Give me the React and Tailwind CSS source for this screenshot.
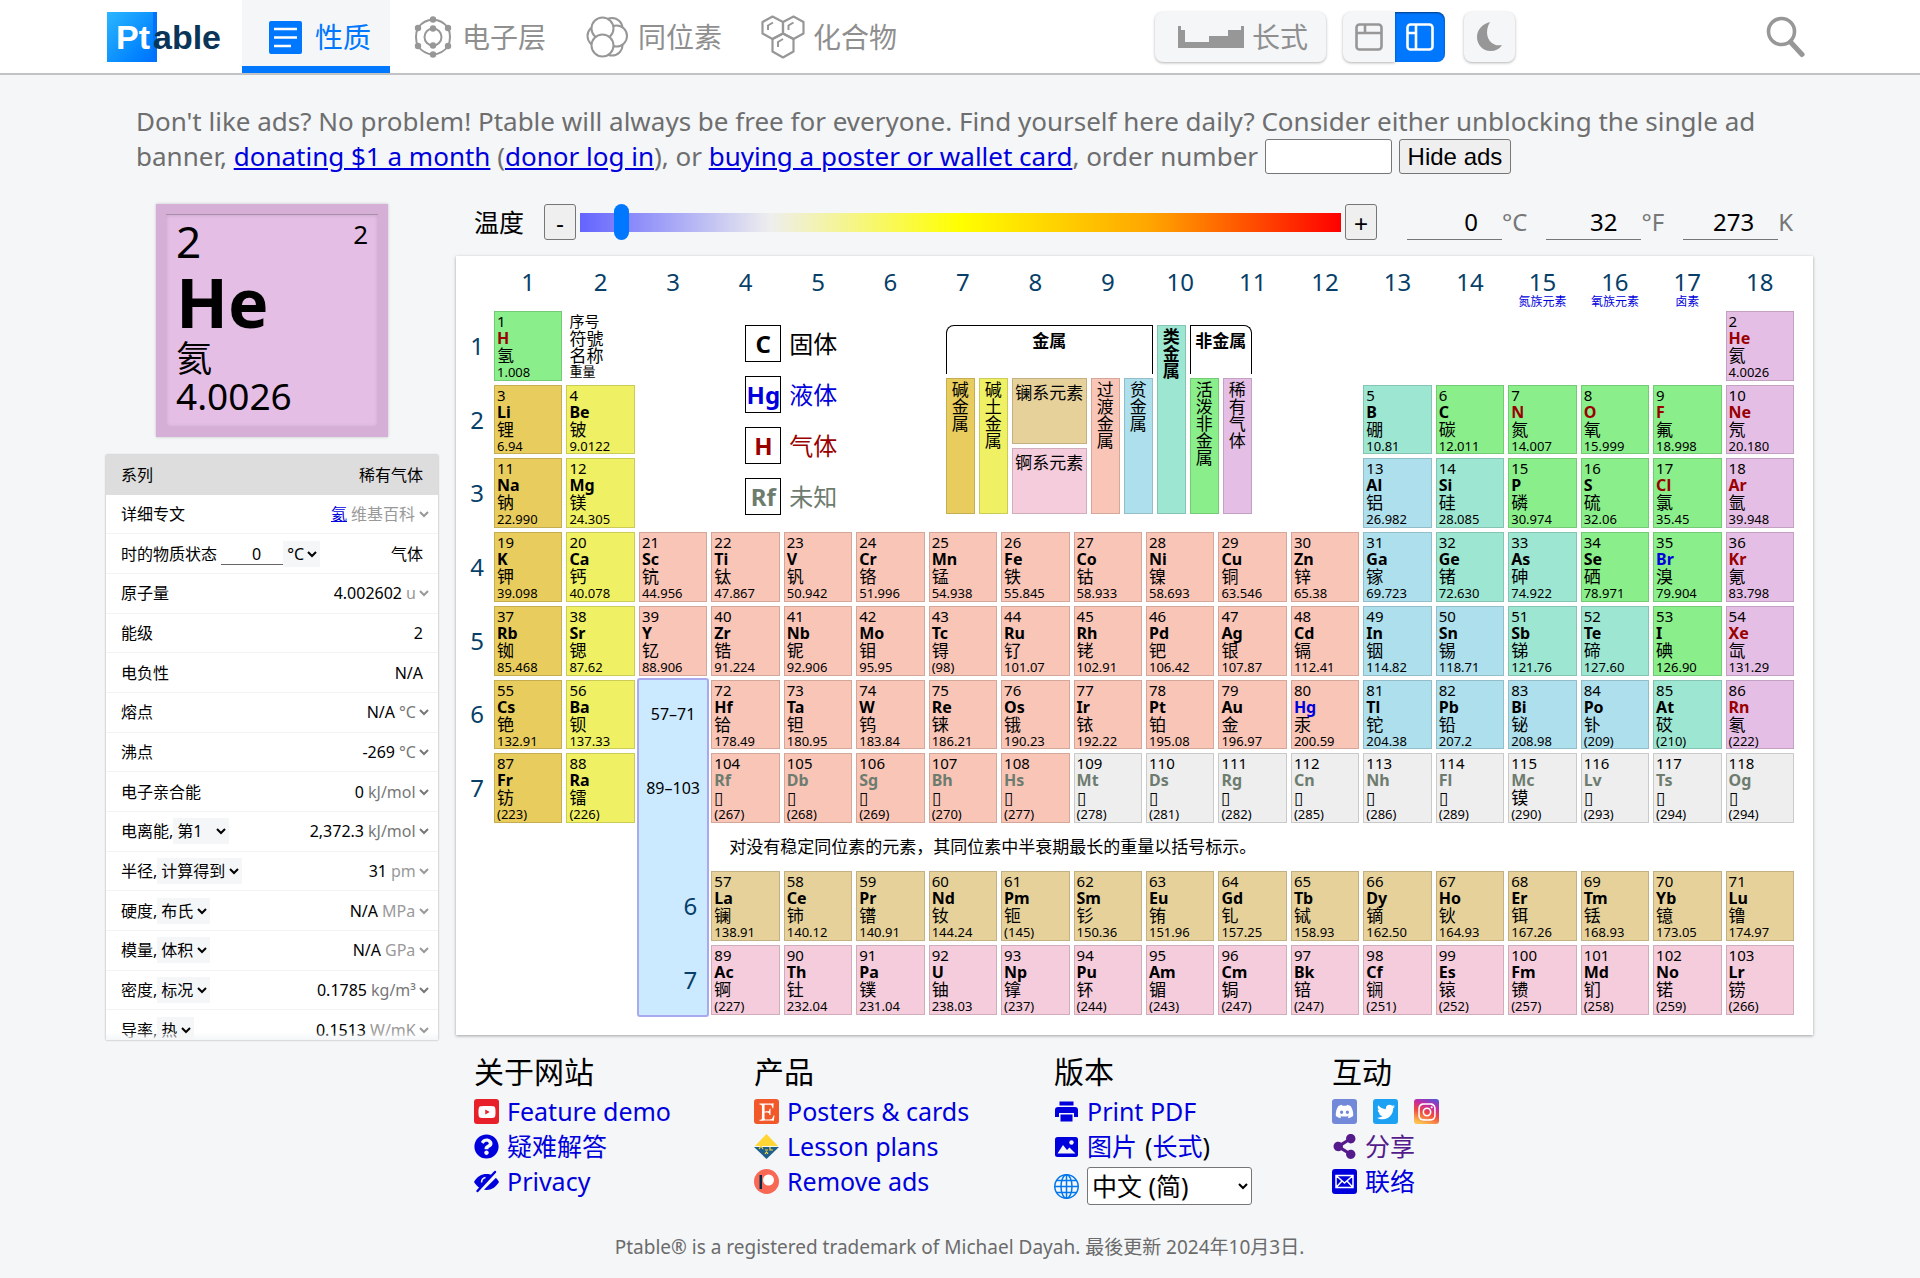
import React from "react";
import { FaYoutube, FaQuestionCircle, FaEtsy, FaDiscord, FaTwitter, FaInstagram, FaShareAlt } from "react-icons/fa";

const TONE = {
  alkali: "bg-[#e8cd5e]",
  earth: "bg-[#eff064]",
  trans: "bg-[#f9c5b7]",
  post: "bg-[#addfec]",
  semi: "bg-[#9de7d2]",
  non: "bg-[#8aee8a]",
  noble: "bg-[#e5bee6]",
  lan: "bg-[#e6d19a]",
  act: "bg-[#f5ccdb]",
  unk: "bg-[#eeeeee]",
};

const STATE = { s: "text-black", l: "text-[#0000dd]", g: "text-[#990000]", u: "text-[#6d7c6f]" };

/* grid row | first column | first atomic number | entries "symbol name weight category state" */
const ROWS = [
  [2, 1, 1, "H 氢 1.008 non g"],
  [2, 18, 2, "He 氦 4.0026 noble g"],
  [3, 1, 3, "Li 锂 6.94 alkali s;Be 铍 9.0122 earth s"],
  [3, 13, 5, "B 硼 10.81 semi s;C 碳 12.011 non s;N 氮 14.007 non g;O 氧 15.999 non g;F 氟 18.998 non g;Ne 氖 20.180 noble g"],
  [4, 1, 11, "Na 钠 22.990 alkali s;Mg 镁 24.305 earth s"],
  [4, 13, 13, "Al 铝 26.982 post s;Si 硅 28.085 semi s;P 磷 30.974 non s;S 硫 32.06 non s;Cl 氯 35.45 non g;Ar 氩 39.948 noble g"],
  [5, 1, 19, "K 钾 39.098 alkali s;Ca 钙 40.078 earth s;Sc 钪 44.956 trans s;Ti 钛 47.867 trans s;V 钒 50.942 trans s;Cr 铬 51.996 trans s;Mn 锰 54.938 trans s;Fe 铁 55.845 trans s;Co 钴 58.933 trans s;Ni 镍 58.693 trans s;Cu 铜 63.546 trans s;Zn 锌 65.38 trans s;Ga 镓 69.723 post s;Ge 锗 72.630 semi s;As 砷 74.922 semi s;Se 硒 78.971 non s;Br 溴 79.904 non l;Kr 氪 83.798 noble g"],
  [6, 1, 37, "Rb 铷 85.468 alkali s;Sr 锶 87.62 earth s;Y 钇 88.906 trans s;Zr 锆 91.224 trans s;Nb 铌 92.906 trans s;Mo 钼 95.95 trans s;Tc 锝 (98) trans s;Ru 钌 101.07 trans s;Rh 铑 102.91 trans s;Pd 钯 106.42 trans s;Ag 银 107.87 trans s;Cd 镉 112.41 trans s;In 铟 114.82 post s;Sn 锡 118.71 post s;Sb 锑 121.76 semi s;Te 碲 127.60 semi s;I 碘 126.90 non s;Xe 氙 131.29 noble g"],
  [7, 1, 55, "Cs 铯 132.91 alkali s;Ba 钡 137.33 earth s"],
  [7, 4, 72, "Hf 铪 178.49 trans s;Ta 钽 180.95 trans s;W 钨 183.84 trans s;Re 铼 186.21 trans s;Os 锇 190.23 trans s;Ir 铱 192.22 trans s;Pt 铂 195.08 trans s;Au 金 196.97 trans s;Hg 汞 200.59 trans l;Tl 铊 204.38 post s;Pb 铅 207.2 post s;Bi 铋 208.98 post s;Po 钋 (209) post s;At 砹 (210) semi s;Rn 氡 (222) noble g"],
  [8, 1, 87, "Fr 钫 (223) alkali s;Ra 镭 (226) earth s"],
  [8, 4, 104, "Rf ▯ (267) trans u;Db ▯ (268) trans u;Sg ▯ (269) trans u;Bh ▯ (270) trans u;Hs ▯ (277) trans u;Mt ▯ (278) unk u;Ds ▯ (281) unk u;Rg ▯ (282) unk u;Cn ▯ (285) unk u;Nh ▯ (286) unk u;Fl ▯ (289) unk u;Mc 镆 (290) unk u;Lv ▯ (293) unk u;Ts ▯ (294) unk u;Og ▯ (294) unk u"],
  [10, 4, 57, "La 镧 138.91 lan s;Ce 铈 140.12 lan s;Pr 镨 140.91 lan s;Nd 钕 144.24 lan s;Pm 钷 (145) lan s;Sm 钐 150.36 lan s;Eu 铕 151.96 lan s;Gd 钆 157.25 lan s;Tb 铽 158.93 lan s;Dy 镝 162.50 lan s;Ho 钬 164.93 lan s;Er 铒 167.26 lan s;Tm 铥 168.93 lan s;Yb 镱 173.05 lan s;Lu 镥 174.97 lan s"],
  [11, 4, 89, "Ac 锕 (227) act s;Th 钍 232.04 act s;Pa 镤 231.04 act s;U 铀 238.03 act s;Np 镎 (237) act s;Pu 钚 (244) act s;Am 镅 (243) act s;Cm 锔 (247) act s;Bk 锫 (247) act s;Cf 锎 (251) act s;Es 锿 (252) act s;Fm 镄 (257) act s;Md 钔 (258) act s;No 锘 (259) act s;Lr 铹 (266) act s"],
];

const ELEMENTS = ROWS.flatMap(([row, col, z, list]) =>
  list.split(";").map((entry, i) => {
    const [sym, name, weight, tone, state] = entry.split(" ");
    return { row, col: col + i + 1, z: z + i, sym, name, weight, tone, state };
  })
);

const at = (row, col) => ({ gridRow: row, gridColumn: col });

function Cell({ e }) {
  return (
    <div style={at(e.row, e.col)} className={`flex flex-col border border-black/15 pl-[2px] pt-px ${TONE[e.tone]}`}>
      <span className="text-[15px] leading-[17px]">{e.z}</span>
      <b className={`text-[16px] leading-[17px] ${STATE[e.state]}`}>{e.sym}</b>
      <span className="text-[17px] leading-[18px]">{e.name}</span>
      <span className="text-[13px] leading-[14px]">{e.weight}</span>
    </div>
  );
}

const GROUP_NAMES = { 15: "氮族元素", 16: "氧族元素", 17: "卤素" };

function PhaseLegend() {
  const items = [
    ["C", "固体", "text-black"],
    ["Hg", "液体", "text-[#0000dd]"],
    ["H", "气体", "text-[#990000]"],
    ["Rf", "未知", "text-[#6d7c6f]"],
  ];
  return (
    <div style={{ gridRow: "2 / 5", gridColumn: "5 / 8" }} className="flex flex-col gap-[14px] pl-[34px] pt-[14px]">
      {items.map(([s, t, c]) => (
        <div key={s} className={`flex items-center gap-2 text-[24px] leading-[35px] ${c}`}>
          <b className="flex h-[37px] w-9 items-center justify-center border border-black">{s}</b>
          <span>{t}</span>
        </div>
      ))}
    </div>
  );
}

function Strip({ tone, children, className = "" }) {
  return (
    <div className={`flex justify-center border border-black/15 pt-[2px] text-[17px] leading-[17px] ${TONE[tone]} ${className}`}>
      <span className="w-[17px] break-all">{children}</span>
    </div>
  );
}

function SeriesLegend() {
  return (
    <div style={{ gridRow: "2 / 5", gridColumn: "8 / 13" }} className="pl-[17px] pt-[14px]">
      <div className="grid w-max grid-cols-[29px_29px_75px_29px_29px_29px_29px_29px] grid-rows-[49px_66px_66px] gap-1 text-[17px] leading-[17px]">
        <div className="col-span-5 rounded-tl-lg border border-b-0 border-black pt-[6px] text-center font-bold">金属</div>
        <Strip tone="semi" className="row-span-3 font-bold">类金属</Strip>
        <div className="col-span-2 rounded-tr-lg border border-b-0 border-black pt-[6px] text-center font-bold">非金属</div>
        <Strip tone="alkali" className="row-span-2">碱金属</Strip>
        <Strip tone="earth" className="row-span-2">碱土金属</Strip>
        <div className={`border border-black/15 pt-[5px] text-center ${TONE.lan}`}>镧系元素</div>
        <Strip tone="trans" className="row-span-2">过渡金属</Strip>
        <Strip tone="post" className="row-span-2">贫金属</Strip>
        <Strip tone="non" className="row-span-2">活泼非金属</Strip>
        <Strip tone="noble" className="row-span-2">稀有气体</Strip>
        <div className={`col-start-3 border border-black/15 pt-[5px] text-center ${TONE.act}`}>锕系元素</div>
      </div>
    </div>
  );
}

function PeriodicTable() {
  return (
    <section className="bg-white pb-5 pl-2 pr-[19px] pt-[7px] shadow-[0_1px_3px_rgba(0,0,0,0.35)]">
      <div className="grid h-[752px] grid-cols-[26px_repeat(18,minmax(0,1fr))] grid-rows-[44px_repeat(7,minmax(0,1fr))_40px_70px_70px] gap-1">
        {Array.from({ length: 18 }, (_, i) => i + 1).map((g) => (
          <div key={g} style={at(1, g + 1)} className="flex flex-col items-center whitespace-nowrap pt-[3px] text-[#073f69]">
            <span className="text-[24px] leading-8">{g}</span>
            {GROUP_NAMES[g] && (
              <a href="#" className="text-[12px] leading-2 text-[#0000dd]">{GROUP_NAMES[g]}</a>
            )}
          </div>
        ))}
        {[1, 2, 3, 4, 5, 6, 7].map((p) => (
          <div key={p} style={at(p + 1, 1)} className="flex items-center justify-center text-[24px] leading-8 text-[#073f69]">{p}</div>
        ))}
        <div style={at(2, 3)} className="flex flex-col pl-[3px] pt-[2px] text-[17px] leading-[17px]">
          <span className="text-[15px]">序号</span>
          <span>符號</span>
          <span>名称</span>
          <span className="text-[13px] leading-[14px]">重量</span>
        </div>
        <PhaseLegend />
        <SeriesLegend />
        <div style={{ gridRow: "7 / 12", gridColumn: 4 }} className="-m-[2px] rounded-[3px] border-2 border-[#a9a9f0] bg-[#cbeaff]" />
        <div style={at(7, 4)} className="flex items-center justify-center text-[16px]">57–71</div>
        <div style={at(8, 4)} className="flex items-center justify-center text-[16px]">89–103</div>
        <div style={at(10, 4)} className="flex items-center justify-end pr-[10px] text-[24px] text-[#073f69]">6</div>
        <div style={at(11, 4)} className="flex items-center justify-end pr-[10px] text-[24px] text-[#073f69]">7</div>
        <p style={{ gridRow: 9, gridColumn: "5 / 20" }} className="flex items-center pl-[18px] text-[17px]">
          对没有稳定同位素的元素，其同位素中半衰期最长的重量以括号标示。
        </p>
        {ELEMENTS.map((e) => <Cell key={e.z} e={e} />)}
      </div>
    </section>
  );
}

function Pick({ label, value, className = "" }) {
  return (
    <select aria-label={label} defaultValue={value} className={`appearance-auto border-0 py-px text-[16px] leading-5 ${className}`}>
      <option>{value}</option>
    </select>
  );
}

const PROPS = [
  ["原子量", null, "4.002602", "u", "text-[#999999]"],
  ["能级", null, "2"],
  ["电负性", null, "N/A"],
  ["熔点", null, "N/A", "°C", "text-[#777777]"],
  ["沸点", null, "-269", "°C", "text-[#777777]"],
  ["电子亲合能", null, "0", "kJ/mol", "text-[#777777]"],
  ["电离能", "第1", "2,372.3", "kJ/mol", "text-[#777777]"],
  ["半径", "计算得到", "31", "pm", "text-[#999999]"],
  ["硬度", "布氏", "N/A", "MPa", "text-[#999999]"],
  ["模量", "体积", "N/A", "GPa", "text-[#999999]"],
  ["密度", "标况", "0.1785", "kg/m³", "text-[#777777]"],
  ["导率", "热", "0.1513", "W/mK", "text-[#999999]"],
];

const ROW = "flex items-center justify-between whitespace-nowrap border-b border-[#f1f3f4] pl-[15px]";

function PropertyPanel() {
  return (
    <div className="relative mt-[18px] h-[585px] overflow-hidden bg-white shadow-[0_0_2px_rgba(0,0,0,0.35)]">
      <table className="block text-[16px] leading-5">
        <tbody className="grid h-[595px] auto-rows-fr">
          <tr className="flex items-center justify-between bg-[#dddddd] px-[15px]">
            <th scope="row" className="font-normal">系列</th>
            <td>稀有气体</td>
          </tr>
          <tr className={`${ROW} pr-[6px]`}>
            <th scope="row" className="font-normal">详细专文</th>
            <td>
              <a href="#" className="text-[#0000dd] underline">氦</a>
              <Pick label="详细专文" value="维基百科" className="text-[#999999]" />
            </td>
          </tr>
          <tr className={`${ROW} pr-[15px]`}>
            <th scope="row" className="font-normal">
              <label>
                时的物质状态{" "}
                <input defaultValue="0" className="w-[62px] border-b border-[#666666] pr-[22px] text-right" />
              </label>
              <Pick label="温标" value="°C" className="bg-[#f4f6f8]" />
            </th>
            <td>气体</td>
          </tr>
          {PROPS.map(([name, option, value, unit, tone]) => (
            <tr key={name} className={`${ROW} ${unit ? "pr-[6px]" : "pr-[15px]"}`}>
              <th scope="row" className="font-normal">
                {name}
                {option && <>,<Pick label={name} value={option} className={`bg-[#f4f6f8] ${option === "第1" ? "w-14" : ""}`} /></>}
              </th>
              <td>
                {value}
                {unit && <Pick label={`${name} 单位`} value={unit} className={tone} />}
              </td>
            </tr>
          ))}
        </tbody>
      </table>
      <div className="absolute inset-x-0 bottom-0 h-2 bg-linear-to-b from-transparent to-[#f4f6f8]" />
    </div>
  );
}

function BigTile() {
  return (
    <div className="mx-auto h-[233px] w-[232px] border-[10px] border-[#d5afd6] bg-[#e5bee6] shadow-[0_0_3px_rgba(0,0,0,0.2)]">
      <div className="relative flex h-full flex-col border-t border-black/25 pl-[10px] pt-[5px] shadow-[inset_0_0_4px_rgba(0,0,0,0.15)]">
        <span className="absolute right-[10px] top-[3px] text-[26px] leading-8">2</span>
        <span className="text-[44px] leading-[42px]">2</span>
        <b className="text-[68px] leading-[80px]">He</b>
        <span className="text-[36px] leading-[34px]">氦</span>
        <span className="text-[37px] leading-[40px]">4.0026</span>
      </div>
    </div>
  );
}

function Temperature() {
  const unit = (id, value, label) => (
    <div className="flex items-center">
      <input id={id} defaultValue={value} className="w-[95px] border-b border-[#777777] pr-6 text-right text-[24px] leading-[34px] text-black" />
      <label htmlFor={id} className="text-[24px] leading-[34px] text-[#777777]">{label}</label>
    </div>
  );
  const step = "h-9 w-8 shrink-0 rounded-[3px] border border-[#767676] bg-[#efefef] pt-[3px] font-[Liberation_Sans,sans-serif] text-[24px] leading-7";
  return (
    <div className="mb-4 flex h-9 items-center pl-[18px] pr-5">
      <label htmlFor="temp" className="mr-[20px] shrink-0 text-[25px] leading-9">温度</label>
      <button className={step}>-</button>
      <input
        id="temp"
        type="range"
        min="0"
        max="6000"
        defaultValue="273"
        className="mx-1 h-[19px] min-w-0 flex-1 appearance-none bg-[linear-gradient(90deg,#6464ff_0%,#eeeeee_25%,#ffff00_50%,#ffa500_75%,#ff0000_100%)] [&::-webkit-slider-thumb]:h-9 [&::-webkit-slider-thumb]:w-[15px] [&::-webkit-slider-thumb]:appearance-none [&::-webkit-slider-thumb]:rounded-lg [&::-webkit-slider-thumb]:bg-[#0077ff]"
      />
      <button className={step}>+</button>
      <div className="ml-[30px] flex gap-[19px]">
        {unit("tc", "0", "°C")}
        {unit("tf", "32", "°F")}
        {unit("tk", "273", "K")}
      </div>
    </div>
  );
}

/* ---------- header icons ---------- */

const ListIcon = () => (
  <svg width="33" height="33" viewBox="0 0 33 33">
    <rect width="33" height="33" rx="2" fill="#0077ff" />
    <g stroke="#fff" strokeWidth="2.6">
      <path d="M5 8H28M5 16.5H28M5 25H22" />
    </g>
  </svg>
);

const ShellIcon = () => (
  <svg width="38" height="42" viewBox="0 0 38 42" fill="none" stroke="#979797" strokeWidth="2">
    <path d="M19 3.5Q28 4 34 11.500Q38 21 34 30.500Q28 38 19 38.500Q10 38 4 30.500Q0 21 4 11.500Q10 4 19 3.500Z" />
    <circle cx="19" cy="21" r="8.500" />
    <g fill="#979797" stroke="none">
      <circle cx="19" cy="3.500" r="3.200" />
      <circle cx="34" cy="12" r="3.200" />
      <circle cx="34" cy="30" r="3.200" />
      <circle cx="19" cy="38.500" r="3.200" />
      <circle cx="4" cy="30" r="3.200" />
      <circle cx="4" cy="12" r="3.200" />
      <circle cx="19" cy="12.500" r="3.200" />
      <circle cx="19" cy="29.500" r="3.200" />
    </g>
  </svg>
);

const IsotopeIcon = () => (
  <svg width="42" height="42" viewBox="0 0 42 42" fill="#fff" stroke="#979797" strokeWidth="2">
    <circle cx="26" cy="12.500" r="10.500" />
    <circle cx="26" cy="29" r="10.500" />
    <circle cx="12" cy="20" r="10.500" />
    <circle cx="30.500" cy="20" r="10.500" />
    <circle cx="16.500" cy="12.500" r="11" />
    <circle cx="16.500" cy="29.500" r="11" />
  </svg>
);

const CompoundIcon = () => (
  <svg width="44" height="44" viewBox="0 0 44 44" fill="none" stroke="#979797" strokeWidth="2.200" strokeLinejoin="round">
    <path d="M11.500 1.500L22 7V18.500L11.500 24L1.500 18.500V7Z" />
    <path d="M32.500 1.500L42.500 7V18.500L32.500 24L22 18.500V7Z" />
    <path d="M22 18.500L32.500 24V36.500L22 42.500L11.500 36.500V24Z" />
    <path d="M7 15V10.500L12 7.500M27.500 15V10.500L32.500 7.500M17 32V27L22 24" strokeWidth="2" />
  </svg>
);

const LongFormIcon = () => (
  <svg width="66" height="22" viewBox="0 0 66 22">
    <path fill="#979797" d="M0 0H3V4H7V16H31V10H50V4H63V0H66V22H0Z" />
  </svg>
);

const LayoutIcon = ({ side }) => (
  <svg width="28" height="28" viewBox="0 0 28 28" fill="none" stroke={side ? "#fff" : "#979797"} strokeWidth="2.600">
    <rect x="1.500" y="1.500" width="25" height="25" rx="3" />
    {side ? <path d="M10 1.500V26.500M1.500 10H10" /> : <path d="M1.500 10H26.500M10 1.500V10" />}
  </svg>
);

const MoonIcon = () => (
  <svg width="25" height="29" viewBox="0 0 25 29">
    <path fill="#979797" d="M13 0C5 2 0 8 0 15C0 23 6 29 13.500 29C18.500 29 22.500 27 25 23C22 23.500 20 23.500 17.500 22.500C10 19.500 7.500 9 13 0Z" />
  </svg>
);

const SearchIcon = () => (
  <svg width="39" height="42" viewBox="0 0 39 42" fill="none" stroke="#979797">
    <circle cx="15.500" cy="15.500" r="13" strokeWidth="3.600" />
    <path d="M24.500 26L36 38.500" strokeWidth="5" strokeLinecap="round" />
  </svg>
);

function Header() {
  const tab = "flex h-full items-center pt-px text-[28px] leading-9 text-[#8f8f8f]";
  const key = "flex h-[50px] items-center justify-center bg-[#f4f6f8] shadow-[0_1px_3px_rgba(0,0,0,0.3)]";
  return (
    <header className="flex h-[75px] items-center border-b-2 border-[#c0c2c4] bg-white pl-[107px] pr-[115px]">
      <a href="#" aria-label="Ptable" className="mr-[21px] flex font-[Liberation_Sans,sans-serif] text-[34px] font-bold leading-[50px]">
        <span className="w-[46px] bg-linear-to-br from-[#2cb5ff] to-[#0072ff] pl-[9px] text-white">Pt</span>
        <span className="bg-[linear-gradient(90deg,#0072ff_4px,transparent_4px)] text-[#0a3558]">able</span>
      </a>
      <nav className="flex h-full">
        <a href="#" className="mr-[24px] flex h-full items-center gap-[13px] border-b-[7px] border-[#0077ff] bg-[#f4f6f8] pl-[27px] pr-[19px] pt-[8px] text-[28px] leading-9 text-[#0077ff]">
          <ListIcon />性质
        </a>
        <a href="#" className={`${tab} mr-[40px] gap-[10px]`}><ShellIcon />电子层</a>
        <a href="#" className={`${tab} mr-[39px] gap-[10px]`}><IsotopeIcon />同位素</a>
        <a href="#" className={`${tab} gap-[8px]`}><CompoundIcon />化合物</a>
      </nav>
      <div className="ml-auto mr-[251px] flex items-center">
        <button className={`${key} mr-[17px] gap-2 rounded-lg pl-[23px] pr-[18px] text-[28px] text-[#8f8f8f]`}>
          <LongFormIcon />长式
        </button>
        <button aria-label="top layout" className={`${key} w-[52px] rounded-l-lg`}><LayoutIcon /></button>
        <button aria-label="side layout" className="mr-[19px] flex h-[50px] w-[50px] items-center justify-center rounded-r-lg bg-[#0077ff] shadow-[inset_0_1px_2px_rgba(0,0,0,0.5)]">
          <LayoutIcon side />
        </button>
        <button aria-label="dark mode" className={`${key} w-[51px] rounded-lg`}><MoonIcon /></button>
      </div>
      <button aria-label="search"><SearchIcon /></button>
    </header>
  );
}

/* ---------- footer ---------- */

const Badge = ({ className, children }) => (
  <span className={`flex h-[25px] w-[25px] shrink-0 items-center justify-center ${className}`}>{children}</span>
);

const HiddenEyeIcon = () => (
  <svg width="25" height="25" viewBox="0 0 25 25">
    <path fill="#0000dd" d="M0 13C3 7.500 7.500 5 12.500 5C17.500 5 22 7.500 25 13C22 18 17.500 21 12.500 21C7.500 21 3 18 0 13Z" />
    <path d="M7.500 13.500Q7.500 9.500 11.500 8.500" fill="none" stroke="#f4f6f8" strokeWidth="1.500" />
    <path d="M4 23.500L23.500 4" stroke="#f4f6f8" strokeWidth="4.500" />
    <path d="M3.500 22L21 3" stroke="#0000dd" strokeWidth="2.400" strokeLinecap="round" />
  </svg>
);

const PrinterIcon = () => (
  <svg width="25" height="25" viewBox="0 0 25 25" fill="#0000dd">
    <path d="M5.500 2.500H19.500V6.500H5.500Z" />
    <path d="M4 8H21Q24 8 24 11V18H20V14H5V18H1V11Q1 8 4 8Z" />
    <path d="M6.500 15.500H18.500V22.500H6.500Z" />
  </svg>
);

const PictureIcon = () => (
  <svg width="25" height="25" viewBox="0 0 25 25">
    <rect x="1" y="3" width="23" height="20" rx="2.500" fill="#0000dd" />
    <path d="M3.500 19.500L9 11L13 16L15.500 13.500L21.500 19.500Z" fill="#f4f6f8" />
    <circle cx="17.500" cy="8.500" r="2.200" fill="#f4f6f8" />
  </svg>
);

const LessonIcon = () => (
  <svg width="25" height="25" viewBox="0 0 25 25">
    <path d="M12.500 0L24 12H1Z" fill="#ffd633" />
    <path d="M0 13H25L12.500 25Z" fill="#1d5f8a" />
    <path d="M5 15L7 12L9 15M11 16H14M16 13V16H19M11 20L12.500 18L14 20" stroke="#ffd633" strokeWidth="1.200" fill="none" />
  </svg>
);

const PatreonIcon = () => (
  <svg width="25" height="25" viewBox="0 0 25 25">
    <circle cx="12.500" cy="12.500" r="12.500" fill="#f96854" />
    <rect x="5.500" y="6" width="2.500" height="14" fill="#052d49" />
    <circle cx="14.500" cy="11" r="5.500" fill="#fff" />
  </svg>
);

const GlobeIcon = () => (
  <svg width="25" height="25" viewBox="0 0 25 25" fill="none" stroke="#0077ee" strokeWidth="1.500">
    <circle cx="12.500" cy="12.500" r="11.700" />
    <ellipse cx="12.500" cy="12.500" rx="5.500" ry="11.700" />
    <path d="M12.500 0.700V24.300M0.700 12.500H24.300M2.500 6.500H22.500M2.500 18.500H22.500" />
  </svg>
);

const MailIcon = () => (
  <svg width="25" height="25" viewBox="0 0 25 25">
    <rect width="25" height="25" rx="3" fill="#0000dd" />
    <path d="M4 6.500H21V18.500H4ZM4 6.500L12.500 14L21 6.500M4 18.500L10 12M21 18.500L15 12" fill="none" stroke="#fff" strokeWidth="1.500" />
  </svg>
);

function FooterColumn({ title, className = "", children }) {
  return (
    <div className={className}>
      <h2 className="mb-[2px] text-[30px] leading-[40px]">{title}</h2>
      {children}
    </div>
  );
}

const Item = ({ icon, children, className = "text-[#0000dd]" }) => (
  <a href="#" className={`flex items-center gap-2 whitespace-nowrap leading-[35px] ${className}`}>{icon}{children}</a>
);

function Footer() {
  return (
    <footer className="pb-4 text-[25px]">
      <div className="flex pl-[368px] pt-3">
        <FooterColumn title="关于网站" className="w-[280px]">
          <Item icon={<Badge className="rounded-[3px] bg-[#e8202a] text-white"><FaYoutube size={18} /></Badge>}>Feature demo</Item>
          <Item icon={<FaQuestionCircle size={25} />}>疑难解答</Item>
          <Item icon={<HiddenEyeIcon />}>Privacy</Item>
        </FooterColumn>
        <FooterColumn title="产品" className="w-[300px]">
          <Item icon={<Badge className="rounded-[3px] bg-[#f1592a] text-white"><FaEtsy size={20} /></Badge>}>Posters &amp; cards</Item>
          <Item icon={<LessonIcon />}>Lesson plans</Item>
          <Item icon={<PatreonIcon />}>Remove ads</Item>
        </FooterColumn>
        <FooterColumn title="版本" className="w-[278px]">
          <Item icon={<PrinterIcon />}>Print PDF</Item>
          <div className="flex items-center leading-[35px]">
            <Item icon={<PictureIcon />}>图片</Item>
            <span className="ml-2">(</span><a href="#" className="text-[#0000dd]">长式</a>)
          </div>
          <label className="mt-[3px] flex items-center gap-2">
            <GlobeIcon />
            <select aria-label="language" className="h-[38px] w-[165px] appearance-auto rounded-[3px] border border-[#767676] bg-white text-[25px]">
              <option>中文 (简)</option>
            </select>
          </label>
        </FooterColumn>
        <FooterColumn title="互动">
          <div className="flex h-[35px] items-center gap-4">
            <a href="#" aria-label="Discord"><Badge className="rounded-[3px] bg-[#7289da] text-white"><FaDiscord size={19} /></Badge></a>
            <a href="#" aria-label="Twitter"><Badge className="rounded-[3px] bg-[#1da1f2] text-white"><FaTwitter size={18} /></Badge></a>
            <a href="#" aria-label="Instagram"><Badge className="rounded-[3px] bg-[linear-gradient(20deg,#fdc04e_10%,#f0483f_45%,#c32aa3_70%,#5b52d6_95%)] text-white"><FaInstagram size={20} /></Badge></a>
          </div>
          <Item icon={<FaShareAlt size={25} />} className="text-[#551a8b]">分享</Item>
          <Item icon={<MailIcon />}>联络</Item>
        </FooterColumn>
      </div>
      <p className="mt-[28px] text-center text-[19px] leading-7 text-[#6b6b6b]">
        Ptable® is a registered trademark of Michael Dayah. 最後更新 2024年10月3日.
      </p>
    </footer>
  );
}

export default function App() {
  return (
    <div className="min-h-screen bg-[#f4f6f8] font-['Noto_Sans','Noto_Sans_CJK_SC',sans-serif] text-black">
      <Header />
      <main className="pl-[106px] pr-[107px]">
        <p className="ml-[30px] pt-[29px] text-[26px] leading-[35px] text-[#6e6e6e]">
          Don't like ads? No problem! Ptable will always be free for everyone. Find yourself here daily? Consider either unblocking the single ad banner,{" "}
          <a href="#" className="text-[#0000dd] underline">donating $1 a month</a> (<a href="#" className="text-[#0000dd] underline">donor log in</a>), or{" "}
          <a href="#" className="text-[#0000dd] underline">buying a poster or wallet card</a>,{" "}
          <label>
            order number{" "}
            <input className="h-[35px] w-[127px] rounded-[3px] border border-[#767676] bg-white align-bottom" />
          </label>{" "}
          <button className="h-[35px] rounded-[3px] border border-[#767676] bg-[#efefef] px-2 align-bottom font-[Liberation_Sans,sans-serif] text-[24px] leading-8 text-black">Hide ads</button>
        </p>
        <div className="mt-[30px] flex items-start gap-[18px]">
          <aside className="w-[332px] shrink-0">
            <BigTile />
            <PropertyPanel />
          </aside>
          <div className="min-w-0 flex-1">
            <Temperature />
            <PeriodicTable />
          </div>
        </div>
        <Footer />
      </main>
    </div>
  );
}
